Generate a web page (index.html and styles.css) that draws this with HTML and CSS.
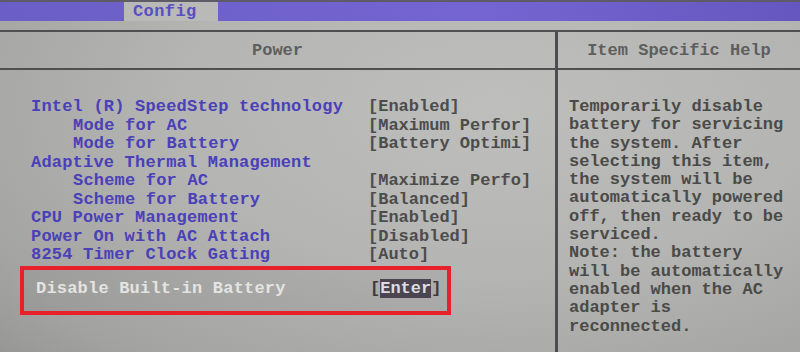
FILE: index.html
```html
<!DOCTYPE html>
<html lang="en">
<head>
    <meta charset="UTF-8">
    <meta name="viewport" content="width=device-width, initial-scale=1.0">
    <title>Config - Power</title>
    <link rel="stylesheet" href="styles.css">
</head>

<body>
    <div class="screen">
        <div class="top-strip"></div>
        <div class="menu-bar">
            <span class="menu-tab">Config</span>
        </div>

        <div class="panel">
            <div class="col col-main">
                <div class="col-head">Power</div>
                <div class="col-body">
                    <div class="setting"><span class="label">Intel (R) SpeedStep technology</span><span class="value">[Enabled]</span></div>
                    <div class="setting sub"><span class="label">Mode for AC</span><span class="value">[Maximum Perfor]</span></div>
                    <div class="setting sub"><span class="label">Mode for Battery</span><span class="value">[Battery Optimi]</span></div>
                    <div class="setting"><span class="label">Adaptive Thermal Management</span><span class="value"></span></div>
                    <div class="setting sub"><span class="label">Scheme for AC</span><span class="value">[Maximize Perfo]</span></div>
                    <div class="setting sub"><span class="label">Scheme for Battery</span><span class="value">[Balanced]</span></div>
                    <div class="setting"><span class="label">CPU Power Management</span><span class="value">[Enabled]</span></div>
                    <div class="setting"><span class="label">Power On with AC Attach</span><span class="value">[Disabled]</span></div>
                    <div class="setting"><span class="label">8254 Timer Clock Gating</span><span class="value">[Auto]</span></div>

                    <div class="selected-box">
                        <div class="setting selected"><span class="label">Disable Built-in Battery</span><span class="value">[<span class="cursor">Enter</span>]</span></div>
                    </div>
                </div>
            </div>

            <div class="col col-help">
                <div class="col-head">Item Specific Help</div>
                <div class="col-body help-text">
                    Temporarily disable<br>
                    battery for servicing<br>
                    the system. After<br>
                    selecting this item,<br>
                    the system will be<br>
                    automatically powered<br>
                    off, then ready to be<br>
                    serviced.<br>
                    Note: the battery<br>
                    will be automatically<br>
                    enabled when the AC<br>
                    adapter is<br>
                    reconnected.
                </div>
            </div>
        </div>
    </div>
</body>
</html>
```

FILE: styles.css
```css
html, body {
    margin: 0;
    padding: 0;
}

body {
    width: 800px;
    height: 352px;
    overflow: hidden;
    font-family: 'Liberation Mono', 'DejaVu Sans Mono', monospace;
    font-weight: bold;
    font-size: 17px;
    background-color: #b2b2b0;
}

.screen {
    height: 352px;
    background: radial-gradient(ellipse 90% 110% at 62% 30%, #bebebc 0%, #b4b4b2 45%, #a3a3a1 80%, #929290 100%);
}

.top-strip {
    height: 2px;
    background-color: #5e5a66;
}

.menu-bar {
    height: 19px;
    background: linear-gradient(to right, #6b5ec6, #7465d2 60%, #6656bf);
}

.menu-tab {
    display: inline-block;
    margin-left: 124px;
    width: 94px;
    height: 19px;
    box-sizing: border-box;
    padding-left: 9px;
    line-height: 20px;
    letter-spacing: 0.4px;
    background-color: #b9b9b7;
    color: #5a4fc2;
}

.panel {
    margin-top: 9px;
    border-top: 2px solid #4f4f52;
    display: grid;
    grid-template-columns: 558px 1fr;
    height: 321px;
}

.col-main {
    border-right: 3px solid #4c4c50;
}

.col-head {
    height: 36px;
    line-height: 38px;
    text-align: center;
    color: #5e5e5e;
    border-bottom: 2px solid #4f4f52;
}

.col-body {
    padding-top: 28px;
    line-height: 18.5px;
}

.col-main .col-body {
    padding-left: 31px;
}

.setting {
    display: grid;
    grid-template-columns: 337px auto;
    height: 18.5px;
    white-space: pre;
}

.setting .label {
    color: #4a40b8;
    letter-spacing: 0.2px;
}

.setting.sub .label {
    padding-left: 42px;
}

.setting .value {
    color: #4c4c4c;
}

.selected-box {
    margin: 1.5px 0 0 -11px;
    width: 431px;
    box-sizing: border-box;
    border: 4px solid #e8202a;
    padding: 10px 0 12.5px 12px;
    background-color: rgba(0, 0, 0, 0.04);
}

.setting.selected {
    grid-template-columns: 334px auto;
}

.setting.selected .label {
    color: #e4e4e2;
}

.setting.selected .value {
    color: #3a3a3e;
}

.cursor {
    background-color: #4a4550;
    color: #dcdce2;
}

.help-text {
    padding-left: 11px;
    line-height: 18.3px;
    color: #4a4a48;
}
```
